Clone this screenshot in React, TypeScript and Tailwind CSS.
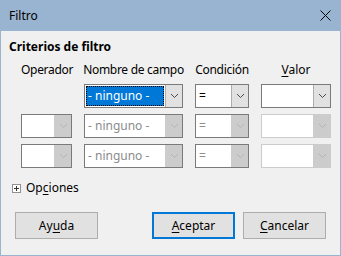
import React from "react";

const font = { fontFamily: '"Noto Sans", "Open Sans", sans-serif' };

function Chevron({ disabled }: { disabled?: boolean }) {
  return (
    <svg width="9" height="6" viewBox="0 0 9 6" className="block">
      <path d="M1 1 L4.5 4.5 L8 1" fill="none" stroke={disabled ? "#b4b4b4" : "#4a4a4a"} strokeWidth="1" />
    </svg>
  );
}

function Combo({
  text,
  disabled,
  selected,
  lightBorder,
}: {
  text?: string;
  disabled?: boolean;
  selected?: boolean;
  lightBorder?: boolean;
}) {
  return (
    <div
      className={`flex h-[24px] w-full border ${lightBorder ? "border-[#cccccc]" : "border-[#7a7a7a]"} bg-white`}
    >
      <div className="flex-1 min-w-0 flex items-center p-[1px]">
        {selected ? (
          <div className="h-full w-full bg-[#0078d7] outline-1 outline-dotted outline-black -outline-offset-1 flex items-center pl-[2px] text-white text-[12px] leading-none whitespace-nowrap">
            {text}
          </div>
        ) : (
          <div className={`pl-[2px] text-[12px] leading-none whitespace-nowrap ${disabled ? "text-[#8c8c8c]" : "text-black"}`}>{text}</div>
        )}
      </div>
      <div
        className={`w-[17px] flex items-center justify-center border-l ${
          disabled ? "bg-[#cccccc] border-[#cccccc]" : "bg-[#e1e1e1] border-[#adadad]"
        }`}
      >
        <Chevron disabled={disabled} />
      </div>
    </div>
  );
}

function Btn({ children, def }: { children: React.ReactNode; def?: boolean }) {
  return (
    <div
      className={`w-[83px] h-[27px] flex items-center justify-center text-[12px] text-black bg-[#e1e1e1] ${
        def ? "border-2 border-[#0078d7]" : "border border-[#adadad]"
      }`}
    >
      {children}
    </div>
  );
}

export default function App() {
  return (
    <div className="w-[341px] h-[256px] flex flex-col bg-[#99b4d1]" style={font}>
      <div className="h-[31px] flex items-center justify-between pl-[9px] pr-[10px] shrink-0">
        <span className="text-[12px] text-black">Filtro</span>
        <svg width="11" height="11" viewBox="0 0 11 11">
          <path d="M0.5 0.5 L10.5 10.5 M10.5 0.5 L0.5 10.5" stroke="#000" strokeWidth="1" />
        </svg>
      </div>
      <div className="flex-1 mx-[1px] mb-[1px] bg-[#f0f0f0] flex flex-col">
        <div className="pl-[8px] pt-[8px] text-[12px] font-bold text-black leading-[16px]">Criterios de filtro</div>
        <div className="pl-[20px] pt-[7px] grid grid-cols-[51px_99px_54px_70px] gap-x-[12px] gap-y-[6px] text-[12px] text-black">
          <div className="text-center leading-[16px] whitespace-nowrap tracking-[-0.3px]">Operador</div>
          <div className="flex justify-center leading-[16px] whitespace-nowrap tracking-[-0.3px]">Nombre de campo</div>
          <div className="text-center leading-[16px] whitespace-nowrap tracking-[-0.3px]">Condición</div>
          <div className="text-center leading-[16px] whitespace-nowrap">
            <span className="underline underline-offset-2">V</span>alor
          </div>

          <div />
          <Combo text="- ninguno -" selected />
          <Combo text="=" />
          <Combo />

          <Combo disabled />
          <Combo text="- ninguno -" disabled />
          <Combo text="=" disabled />
          <Combo disabled lightBorder />

          <Combo disabled />
          <Combo text="- ninguno -" disabled />
          <Combo text="=" disabled />
          <Combo disabled lightBorder />
        </div>
        <div className="flex items-center pl-[11px] pt-[12px] gap-[5px] text-[12px] text-black leading-[16px]">
          <svg width="9" height="9" viewBox="0 0 9 9">
            <rect x="0.5" y="0.5" width="8" height="8" fill="#fff" stroke="#919191" />
            <path d="M2 4.5 H7 M4.5 2 V7" stroke="#333" />
          </svg>
          <span>
            Op<span className="underline underline-offset-2">c</span>iones
          </span>
        </div>
        <div className="flex pl-[14px] pr-[14px] pt-[16px]">
          <Btn>
            Ay<span className="underline underline-offset-2">u</span>da
          </Btn>
          <div className="flex-1" />
          <div className="flex gap-[8px]">
            <Btn def>
              <span className="underline underline-offset-2">A</span>ceptar
            </Btn>
            <Btn>
              <span className="underline underline-offset-2">C</span>ancelar
            </Btn>
          </div>
        </div>
      </div>
    </div>
  );
}
